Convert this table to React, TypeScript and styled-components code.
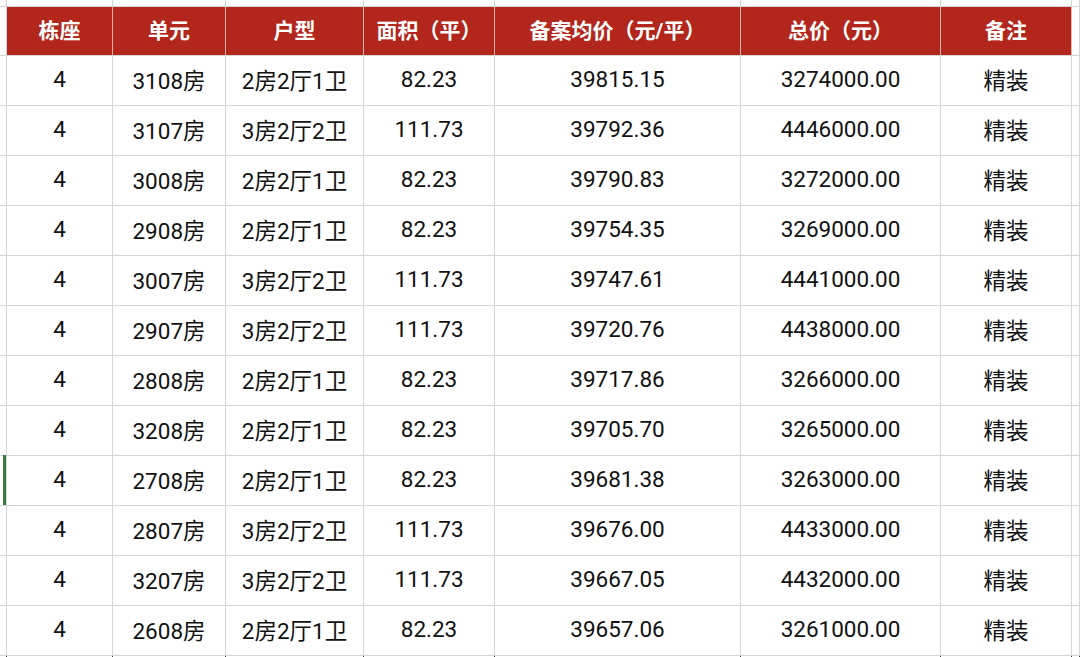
import React from "react";
import styled, { createGlobalStyle } from "styled-components";

const GlobalStyle = createGlobalStyle`
  html, body {
    margin: 0;
    padding: 0;
    background: #ffffff;
    overflow: hidden;
  }
  body {
    font-family: Roboto, "Noto Sans CJK SC", sans-serif;
  }
`;

const COLS = "7px 106px 113px 138px 131px 246px 200px 131px 1fr";

const Sheet = styled.div`
  width: 1080px;
  height: 657px;
  display: grid;
  grid-template-columns: ${COLS};
  grid-template-rows: 7px 49px repeat(12, 50px) 1fr;
  background: #ffffff;
`;

const Cell = styled.div<{ $head?: boolean; $tail?: boolean }>`
  display: flex;
  align-items: center;
  justify-content: center;
  box-sizing: border-box;
  padding-bottom: ${({ $head }) => ($head ? "4px" : "3px")};
  border-right: 1px solid
    ${({ $head, $tail }) => ($tail ? "#3a3a3a" : $head ? "#e6b4ae" : "#d5d5d5")};
  border-bottom: 1px solid ${({ $tail }) => ($tail ? "transparent" : "#d5d5d5")};
  background: ${({ $head }) => ($head ? "#b2261c" : "#ffffff")};
  color: ${({ $head }) => ($head ? "#ffffff" : "#111111")};
  font-size: ${({ $head }) => ($head ? "21px" : "22.5px")};
  font-weight: ${({ $head }) => ($head ? 700 : 400)};
  white-space: nowrap;
  position: relative;
`;

const Marker = styled.span`
  position: absolute;
  left: 3px;
  top: -1px;
  bottom: 0;
  width: 3px;
  background: #3f7a45;
`;

const headers = ["栋座", "单元", "户型", "面积（平）", "备案均价（元/平）", "总价（元）", "备注"];

const rows: string[][] = [
  ["4", "3108房", "2房2厅1卫", "82.23", "39815.15", "3274000.00", "精装"],
  ["4", "3107房", "3房2厅2卫", "111.73", "39792.36", "4446000.00", "精装"],
  ["4", "3008房", "2房2厅1卫", "82.23", "39790.83", "3272000.00", "精装"],
  ["4", "2908房", "2房2厅1卫", "82.23", "39754.35", "3269000.00", "精装"],
  ["4", "3007房", "3房2厅2卫", "111.73", "39747.61", "4441000.00", "精装"],
  ["4", "2907房", "3房2厅2卫", "111.73", "39720.76", "4438000.00", "精装"],
  ["4", "2808房", "2房2厅1卫", "82.23", "39717.86", "3266000.00", "精装"],
  ["4", "3208房", "2房2厅1卫", "82.23", "39705.70", "3265000.00", "精装"],
  ["4", "2708房", "2房2厅1卫", "82.23", "39681.38", "3263000.00", "精装"],
  ["4", "2807房", "3房2厅2卫", "111.73", "39676.00", "4433000.00", "精装"],
  ["4", "3207房", "3房2厅2卫", "111.73", "39667.05", "4432000.00", "精装"],
  ["4", "2608房", "2房2厅1卫", "82.23", "39657.06", "3261000.00", "精装"],
];

const App = () => (
  <>
    <GlobalStyle />
    <Sheet>
      {Array.from({ length: 9 }).map((_, i) => (
        <Cell key={`top-${i}`} />
      ))}

      <Cell />
      {headers.map((h) => (
        <Cell $head key={h}>
          {h}
        </Cell>
      ))}
      <Cell />

      {rows.map((r, ri) => (
        <React.Fragment key={ri}>
          <Cell>{ri === 8 && <Marker />}</Cell>
          {r.map((v, ci) => (
            <Cell key={ci}>{v}</Cell>
          ))}
          <Cell />
        </React.Fragment>
      ))}

      {Array.from({ length: 9 }).map((_, i) => (
        <Cell $tail key={`tail-${i}`} />
      ))}
    </Sheet>
  </>
);

export default App;
